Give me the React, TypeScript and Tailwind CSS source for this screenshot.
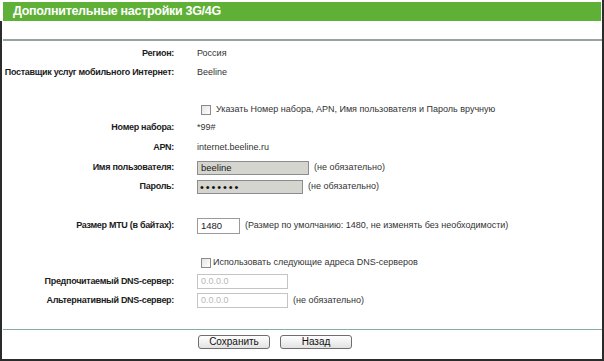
import type { ReactNode } from "react";

function Row({
  label,
  h,
  children,
}: {
  label?: string;
  h: string;
  children?: ReactNode;
}) {
  return (
    <div className={`flex items-center ${h}`}>
      <div className="w-[172px] shrink-0 text-right font-bold text-[#1c1c1c] tracking-[-0.3px] whitespace-nowrap">
        {label}
      </div>
      <div className="ml-[23px] flex items-center text-[#333] whitespace-nowrap">
        {children}
      </div>
    </div>
  );
}

function Checkbox() {
  return (
    <span className="w-[10px] h-[10px] border border-[#8a8a8a] bg-gradient-to-br from-[#e4e4e4] to-white shrink-0" />
  );
}

function Hint({ text = "(не обязательно)" }: { text?: string }) {
  return <span className="ml-[5px] text-[#333]">{text}</span>;
}

export default function App() {
  return (
    <div className="w-[604px] h-[361px] bg-white flex flex-col border-r-2 border-[#2b2b2b] font-['Liberation_Sans',Arial,sans-serif] text-[9px]">
      {/* Header */}
      <div className="pt-[2px] pl-[3px] pr-[1px]">
        <div className="h-[19px] bg-[#5eb036] flex items-center pl-[10px]">
          <h1 className="text-white font-bold text-[12.5px] tracking-[-0.3px]">
            Дополнительные настройки 3G/4G
          </h1>
        </div>
      </div>

      {/* Body */}
      <div className="flex-1 flex flex-col border-l-2 border-b-2 border-[#2b2b2b]">
        <div className="ml-[1px] mt-[18px] h-[2px] bg-[#9aa29f]" />

        <div className="mt-[3px]">
          <Row label="Регион:" h="h-[20px]">
            Россия
          </Row>
          <Row label="Поставщик услуг мобильного Интернет:" h="h-[18px]">
            Beeline
          </Row>
        </div>

        <div className="mt-[19px]">
          <Row h="h-[18px]">
            <span className="ml-[4px] flex items-center gap-[5px]">
              <Checkbox />
              <span>Указать Номер набора, APN, Имя пользователя и Пароль вручную</span>
            </span>
          </Row>
          <Row label="Номер набора:" h="h-[18px]">
            *99#
          </Row>
          <Row label="APN:" h="h-[22px]">
            internet.beeline.ru
          </Row>
          <Row label="Имя пользователя:" h="h-[18px]">
            <div className="w-[112px] h-[14px] border border-[#8c8c8c] bg-[#d5d5cf] flex items-center pl-[3px] text-[#222] text-[9.5px]">
              beeline
            </div>
            <Hint />
          </Row>
          <Row label="Пароль:" h="h-[20px]">
            <div className="w-[106px] h-[14px] border border-[#8c8c8c] bg-[#d5d5cf] flex items-center pl-[2px] text-[#111] text-[11px] tracking-[1.9px] leading-none">
              •••••••
            </div>
            <Hint />
          </Row>
        </div>

        <div className="mt-[19px]">
          <Row label="Размер MTU (в байтах):" h="h-[20px]">
            <div className="w-[43px] h-[16px] border border-[#9a9a9a] bg-white flex items-center pl-[3px] text-[#222] text-[9.5px]">
              1480
            </div>
            <Hint text="(Размер по умолчанию: 1480, не изменять без необходимости)" />
          </Row>
        </div>

        <div className="mt-[18px]">
          <Row h="h-[18px]">
            <span className="ml-[4px] flex items-center gap-[2px]">
              <Checkbox />
              <span>Использовать следующие адреса DNS-серверов</span>
            </span>
          </Row>
          <Row label="Предпочитаемый DNS-сервер:" h="h-[19px]">
            <div className="w-[91px] h-[15px] border border-[#c4c4c4] bg-white flex items-center pl-[3px] text-[#b8b8b8]">
              0.0.0.0
            </div>
          </Row>
          <Row label="Альтернативный DNS-сервер:" h="h-[19px]">
            <div className="w-[91px] h-[15px] border border-[#c4c4c4] bg-white flex items-center pl-[3px] text-[#b8b8b8]">
              0.0.0.0
            </div>
            <Hint />
          </Row>
        </div>

        <div className="ml-[1px] mt-[19px] h-[1px] bg-[#86ada3]" />

        <div className="mt-[5px] flex gap-[10px] pl-[196px]">
          <button className="w-[72px] h-[14px] rounded-[3px] border border-[#6e6e6e] bg-gradient-to-b from-white to-[#e2e2e2] text-[10px] text-[#111] leading-none">
            Сохранить
          </button>
          <button className="w-[72px] h-[14px] rounded-[3px] border border-[#6e6e6e] bg-gradient-to-b from-white to-[#e2e2e2] text-[10px] text-[#111] leading-none">
            Назад
          </button>
        </div>
      </div>
    </div>
  );
}
